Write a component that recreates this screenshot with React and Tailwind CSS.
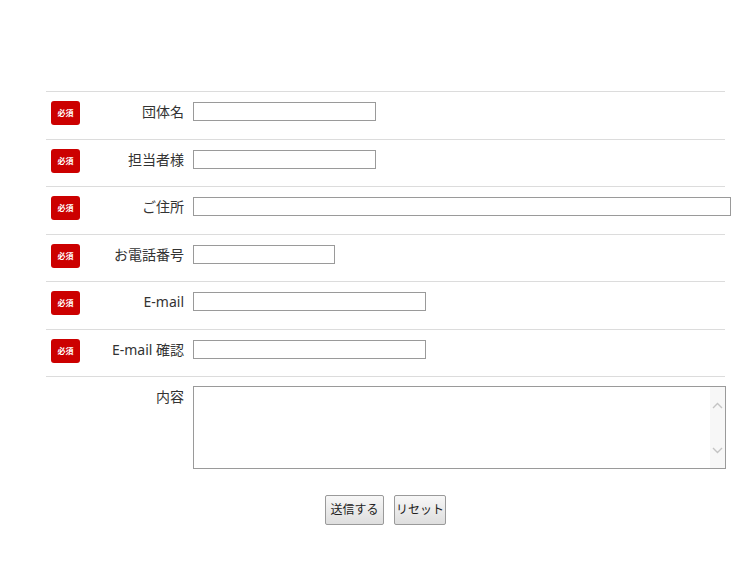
import React from "react";

const font = { fontFamily: '"Noto Sans", "Noto Sans CJK JP", sans-serif' };

function Badge() {
  return (
    <div className="flex h-[24px] w-[29px] shrink-0 items-center justify-center rounded-[3px] bg-[#cc0000] text-[8px] font-semibold leading-none text-white">
      必須
    </div>
  );
}

function Row({ label, width, required = true }) {
  return (
    <div className="flex h-[47.5px] items-start border-t border-[#dcdcdc] pl-[5px] pt-[9px]">
      {required ? <Badge /> : <div className="w-[29px] shrink-0" />}
      <div className="w-[104px] shrink-0 text-right text-[14px] leading-[22px] text-[#333]">
        {label}
      </div>
      <input
        type="text"
        className="ml-[9px] mt-[1px] h-[19px] shrink-0 border border-[#9a9a9a] bg-white outline-none"
        style={{ width }}
      />
    </div>
  );
}

export default function App() {
  return (
    <div className="min-h-[563px] w-[750px] overflow-hidden bg-white" style={font}>
      <div className="ml-[46px] mt-[91px] w-[679px]">
        <Row label="団体名" width={183} />
        <Row label="担当者様" width={183} />
        <Row label="ご住所" width={538} />
        <Row label="お電話番号" width={142} />
        <Row label="E-mail" width={233} />
        <Row label="E-mail 確認" width={233} />
        <div className="flex items-start border-t border-[#dcdcdc] pl-[5px] pt-[9px]">
          <div className="w-[29px] shrink-0" />
          <div className="w-[104px] shrink-0 text-right text-[14px] leading-[22px] text-[#333]">
            内容
          </div>
          <div className="relative ml-[9px] h-[83px] w-[533px] shrink-0">
            <textarea className="h-full w-full resize-none border border-[#9a9a9a] bg-white outline-none" />
            <div className="absolute bottom-[1px] right-[1px] top-[1px] flex w-[15px] flex-col items-center justify-between bg-[#f7f7f7] pb-[14px] pt-[15px]">
              <svg width="11" height="7" viewBox="0 0 11 7">
                <path d="M1 6 L5.5 1.5 L10 6" fill="none" stroke="#c4c4c4" strokeWidth="1.4" />
              </svg>
              <svg width="11" height="7" viewBox="0 0 11 7">
                <path d="M1 1 L5.5 5.5 L10 1" fill="none" stroke="#c4c4c4" strokeWidth="1.4" />
              </svg>
            </div>
          </div>
        </div>
        <div className="mt-[26px] flex justify-center gap-[10px]">
          <button className="h-[30px] w-[59px] rounded-[2px] border border-[#9a9a9a] bg-gradient-to-b from-[#f7f7f7] to-[#dedede] text-[12px] text-[#222]">
            送信する
          </button>
          <button className="h-[30px] w-[52px] rounded-[2px] border border-[#9a9a9a] bg-gradient-to-b from-[#f7f7f7] to-[#dedede] text-[12px] text-[#222]">
            リセット
          </button>
        </div>
      </div>
    </div>
  );
}
